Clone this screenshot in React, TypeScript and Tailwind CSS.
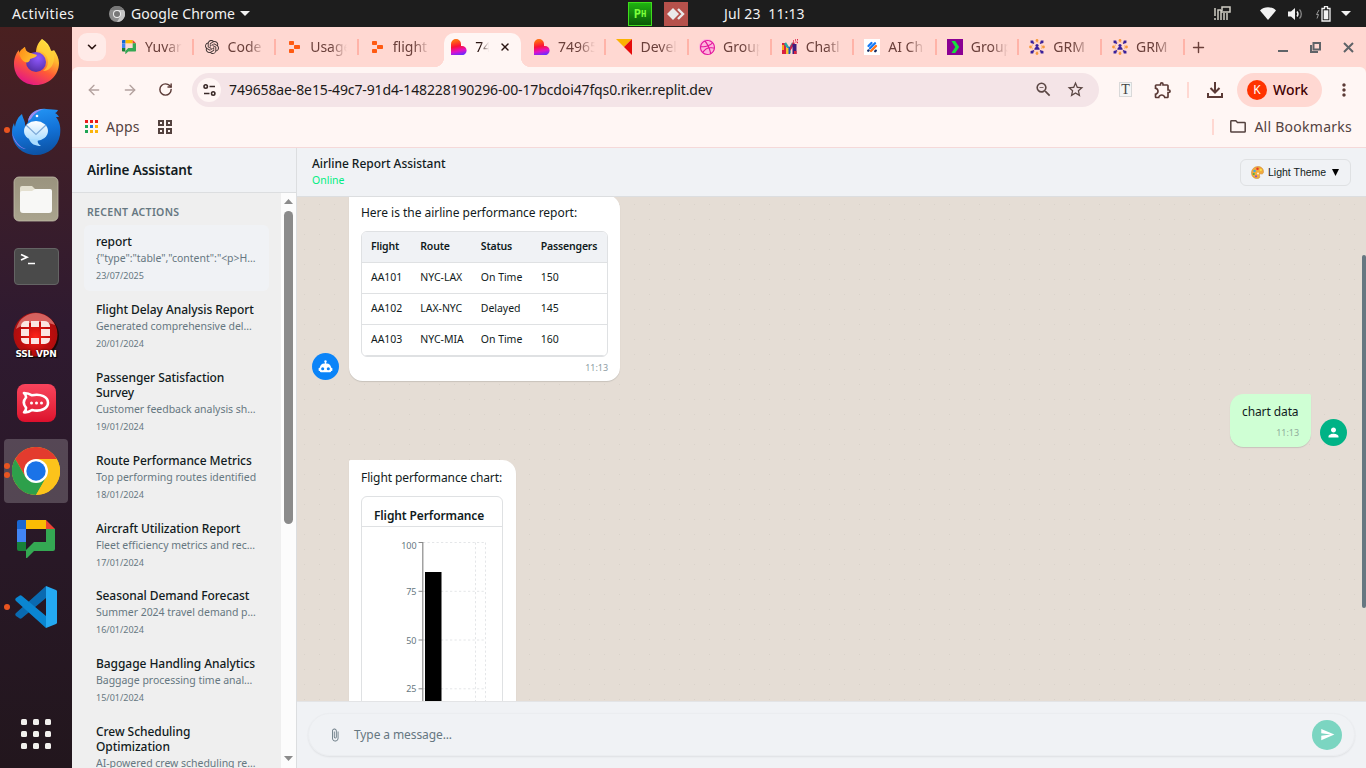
import React from "react";
import { ChevronDown, Plus, X, ArrowLeft, ArrowRight, RotateCw } from "lucide-react";
import {
  MdStarBorder,
  MdOutlineExtension,
  MdMoreVert,
  MdPerson,
  MdSend,
  MdAttachFile,
  MdZoomOut,
} from "react-icons/md";
import { SiOpenai, SiDribbble } from "react-icons/si";

/* ---------- Favicons ---------- */

const ChatFav = ({ size = 16 }: { size?: number }) => (
  <svg width={size} height={size} viewBox="0 0 38 38">
    <path d="M9 0h20v9H9z" fill="#fbbc04" />
    <path d="M2 0h7v9H0V2a2 2 0 0 1 2-2z" fill="#1967d2" />
    <path d="M0 9h9v13H0z" fill="#4285f4" />
    <path d="M29 0l9 9h-9z" fill="#ea4335" />
    <path d="M29 9h9v20a2 2 0 0 1-2 2H17l-7 7h-1V30l8-8h12z" fill="#34a853" />
    <path d="M0 22h9v9H2a2 2 0 0 1-2-2z" fill="#188038" />
  </svg>
);

const ReplitFav = () => (
  <svg width="16" height="16" viewBox="0 0 16 16">
    <rect x="3" y="2" width="5" height="4" rx="0.8" fill="#ff5a12" />
    <rect x="8" y="6" width="6" height="4" rx="0.8" fill="#ff5a12" />
    <rect x="3" y="10" width="5" height="4" rx="0.8" fill="#ff5a12" />
  </svg>
);

const HeartFav = () => (
  <svg width="16" height="16" viewBox="0 0 16 16">
    <defs>
      <linearGradient id="heart" x1="0.3" y1="0" x2="0.5" y2="1">
        <stop offset="0.1" stopColor="#ff6a10" />
        <stop offset="0.45" stopColor="#fb1236" />
        <stop offset="0.75" stopColor="#e112c8" />
        <stop offset="1" stopColor="#6a2cff" />
      </linearGradient>
    </defs>
    <path d="M0 5a5 5 0 0 1 10 0v2h1a4.6 4.6 0 0 1 0 9.200H0z" fill="url(#heart)" />
  </svg>
);

const FlagFav = () => (
  <svg width="16" height="16" viewBox="0 0 16 16">
    <path d="M0 0h16L8 8z" fill="#fbb200" />
    <path d="M16 0v16L8 8z" fill="#e60b0b" />
  </svg>
);

const DribbbleFav = () => (
  <span className="flex h-4 w-4 items-center justify-center rounded-full bg-[#ffb4dc]">
    <SiDribbble size={15} color="#e3179c" />
  </span>
);

const MFav = () => (
  <svg width="16" height="16" viewBox="0 0 16 16" fill="none">
    <path d="M0 4h4v11H0z" fill="#d9213f" />
    <path d="M0 6h2v5H0z" fill="#f7a81b" />
    <path d="M3 4l4.500 7v-1L11 4" stroke="#2aa7a0" strokeWidth="2.400" />
    <path d="M4 9h3v6H4z" fill="#f5c531" />
    <path d="M7.500 11L12 3.500" stroke="#c9234f" strokeWidth="2.400" />
    <path d="M10.500 5h4v10h-4z" fill="#3c1d7c" />
    <path d="M6.500 8h1.500v7H6.500z" fill="#1a56c4" />
    <path d="M12 12h2.500v3H12z" fill="#d9213f" />
    <path d="M11 2h1M13 1h1M15 .800h1M13.500 3h1M15 3.500h1" stroke="#e0264c" strokeWidth="1.400" />
  </svg>
);

const AiFav = () => (
  <svg width="16" height="16" viewBox="0 0 16 16">
    <rect width="16" height="16" fill="#fff" />
    <g strokeWidth="2.300" strokeLinecap="round">
      <path d="M4.500 7l3-3" stroke="#1479f5" />
      <path d="M6 9.200L11 4.200" stroke="#1479f5" />
      <path d="M7 12l5-5" stroke="#ff7418" />
      <path d="M11.200 12.200l.6-.6" stroke="#152a63" />
      <path d="M4.200 11.800l.4-.4" stroke="#152a63" />
    </g>
  </svg>
);

const ArrowFav = () => (
  <svg width="16" height="16" viewBox="0 0 16 16">
    <rect width="16" height="16" fill="#8b0093" />
    <path d="M4.500 2h3.700l4 6-4 6H4.500l3.800-6z" fill="#16e03c" />
  </svg>
);

const GrmFav = () => (
  <svg width="16" height="16" viewBox="0 0 16 16">
    <circle cx="8" cy="8" r="5" fill="none" stroke="#f9b171" strokeWidth="1" strokeDasharray="2 1.200" />
    <g fill="#f79a3c">
      <circle cx="8" cy="1.500" r="1.400" />
      <circle cx="8" cy="14.500" r="1.400" />
      <circle cx="1.500" cy="8" r="1.400" />
      <circle cx="14.500" cy="8" r="1.400" />
    </g>
    <g fill="#39209a">
      <path d="M1.500 1.500h2.700l1 3.600-3.600-1zM14.500 1.500h-2.700l-1 3.600 3.600-1zM1.500 14.500h2.700l1-3.600-3.600 1zM14.500 14.500h-2.700l-1-3.600 3.600 1z" />
      <circle cx="8" cy="6.500" r="1.600" />
      <path d="M5.300 10.800c0-4 5.400-4 5.400 0z" />
    </g>
  </svg>
);

/* ---------- Dock icons ---------- */

const Firefox = () => (
  <svg width="46" height="48" viewBox="0 0 46 48">
    <defs>
      <linearGradient id="ff1" x1="0.8" y1="0" x2="0.3" y2="1">
        <stop offset="0" stopColor="#fff44f" />
        <stop offset="0.35" stopColor="#ffb52e" />
        <stop offset="0.62" stopColor="#ff5a36" />
        <stop offset="1" stopColor="#e31587" />
      </linearGradient>
      <radialGradient id="ff2" cx="0.6" cy="0.3" r="0.8">
        <stop offset="0" stopColor="#9059ff" />
        <stop offset="1" stopColor="#4e2a9c" />
      </radialGradient>
      <linearGradient id="ff3" x1="0" y1="0" x2="1" y2="0.5">
        <stop offset="0" stopColor="#ff8a16" />
        <stop offset="1" stopColor="#ffc02e" />
      </linearGradient>
    </defs>
    <path
      d="M29 1c5 3 8 7 9 12 2 0 3-1 3-1 3 4 5 9 5 13 0 12-10 22-23 22S1 38 1 26c0-6 2-11 5-14 0 0 0 3 1 4 1-3 3-6 5-7 0 3 2 5 5 6h6c0-6 2-10 6-14z"
      fill="url(#ff1)"
    />
    <circle cx="23" cy="24" r="10" fill="url(#ff2)" />
    <path d="M6 15c2-4 5-5 6-6 0 3 2 6 5 6 3 1 5 1 7 2-1 3-5 3-7 4 0 3-3 4-5 3-3-1-5-5-6-9z" fill="url(#ff3)" />
    <path d="M25 13c5 0 10 4 10 11 0 4-2 7-5 9 8 0 12-8 11-16-3-6-8-10-12-16-3 3-4 7-4 12z" fill="#ffd338" opacity="0.7" />
  </svg>
);

const Thunderbird = () => (
  <svg className="mt-[3px]" width="50" height="48" viewBox="0 0 50 48">
    <defs>
      <linearGradient id="tb" x1="0.3" y1="0" x2="0.5" y2="1">
        <stop offset="0" stopColor="#2496f5" />
        <stop offset="0.5" stopColor="#1373d9" />
        <stop offset="1" stopColor="#0c52a4" />
      </linearGradient>
      <linearGradient id="tbe" x1="0" y1="0" x2="0" y2="1">
        <stop offset="0" stopColor="#fff" />
        <stop offset="1" stopColor="#a9dcff" />
      </linearGradient>
    </defs>
    <path
      d="M17 14C18 5 26 0 35 1c5 0 9 1 12 1-1 2-2 3-3 3 2 1 3 2 4 4l-3 0c4 5 5 11 4 18-2 12-12 20-24 20C11 47 1 37 1 24c0-4 1-7 2-9 0 2 1 3 1 4 1-6 3-10 7-13 1 5 4 8 3 13z"
      fill="url(#tb)"
    />
    <path d="M17 13C18 6 24 1 33 1c-7 2-10 5-13 10z" fill="#9b8cf0" />
    <path d="M1 24c2 8 7 15 14 17-6 0-13-7-14-17z" fill="#8e7ae8" />
    <circle cx="26" cy="8" r="1.3" fill="#fff" />
    <ellipse cx="25" cy="23" rx="12" ry="10" fill="url(#tbe)" />
    <path d="M18 31c2 5 6 7 12 7-3-2-4-4-3-7z" fill="#a9dcff" />
    <path d="M15 17l10 9.500L35 17" fill="none" stroke="#7da9d8" strokeWidth="1.200" />
  </svg>
);

const Files = () => (
  <svg className="mt-px" width="46" height="46" viewBox="0 0 46 46">
    <defs>
      <linearGradient id="fl" x1="0" y1="0" x2="0" y2="1">
        <stop offset="0" stopColor="#9a937e" />
        <stop offset="1" stopColor="#aaa48e" />
      </linearGradient>
    </defs>
    <rect x="1" y="1" width="44" height="44" rx="5" fill="url(#fl)" stroke="#c2bda9" strokeWidth="0.8" />
    <path d="M7 12a2 2 0 0 1 2-2h10l4 4h13v10H7z" fill="#e4e0d0" />
    <path d="M7 17a2 2 0 0 1 2-2h10l3-2h15a2 2 0 0 1 2 2v19a3 3 0 0 1-3 3H10a3 3 0 0 1-3-3z" fill="#f8f8f6" />
  </svg>
);

const Terminal = () => (
  <span className="flex h-[37px] w-[45px] items-start rounded-[4px] border border-[#646464] bg-[#4a4a4a] pl-[5px] pt-[4px]">
    <svg width="16" height="12" viewBox="0 0 16 12" fill="none" stroke="#fff" strokeWidth="1.7">
      <path d="M1 1.500l6 2.700-6 2.800M8 10.500h7" />
    </svg>
  </span>
);

const SslVpn = () => (
  <span className="relative mt-px flex h-[46px] w-[46px] justify-center">
    <svg width="46" height="46" viewBox="0 0 46 46">
      <defs>
        <radialGradient id="vpn" cx="0.5" cy="0.55" r="0.55">
          <stop offset="0" stopColor="#ff2418" />
          <stop offset="0.6" stopColor="#c00c0c" />
          <stop offset="1" stopColor="#a51010" />
        </radialGradient>
      </defs>
      <circle cx="24" cy="24" r="22" fill="#1c0a0a" />
      <circle cx="22.5" cy="22.5" r="22" fill="url(#vpn)" />
      <path d="M3 17C6 6 15 1 23 1s16 5 19 12C30 8 14 9 3 17z" fill="#ef9a94" opacity="0.6" />
      <g fill="#fbe5e2">
        <path d="M8 14a5 5 0 0 1 5-5h3v6H8zM18 9h8v6h-8zM28 9h3a6 6 0 0 1 6 5v1h-9zM8 17h8v7H8zM28 17h9v7h-9zM8 26h8v6h-3a5 5 0 0 1-5-5zM18 26h8v6h-8zM28 26h9v1a5 5 0 0 1-5 5h-4z" />
      </g>
    </svg>
    <span
      className="absolute bottom-[-1px] whitespace-nowrap font-['DejaVu_Sans'] text-[9px] font-bold leading-[10px] tracking-[-0.2px] text-white"
      style={{ textShadow: "0 0 2px #000, 1px 1px 1px #000" }}
    >
      SSL VPN
    </span>
  </span>
);

const RocketChat = () => (
  <span className="flex h-[38px] w-[39px] items-center justify-center rounded-[8px] bg-linear-to-b from-[#f8435c] to-[#dd0f2c]">
    <svg width="28" height="24" viewBox="0 0 28 24">
      <path
        d="M2 2c3 0 6 1 8 2.300C19 2.500 26 6 26 11.700S19 21 10 19c-2 1.500-5 2.500-8 2.300 1.500-1.500 2.200-3 2-4.600C1.300 13.500 1.300 9.500 4 6.500 4.200 5 3.500 3.500 2 2z"
        fill="none"
        stroke="#fff"
        strokeWidth="2.600"
        strokeLinejoin="round"
      />
      <circle cx="9.500" cy="12" r="1.500" fill="#fff" />
      <circle cx="14.500" cy="12" r="1.500" fill="#fff" />
      <circle cx="19.500" cy="12" r="1.500" fill="#fff" />
    </svg>
  </span>
);

const Chrome = () => (
  <svg width="48" height="48" viewBox="0 0 48 48">
    <circle cx="24" cy="24" r="24" fill="#fbc116" />
    <path d="M24 12h20.800A24 24 0 0 0 3.200 12L13.600 30z" fill="#e33b2e" />
    <path d="M34.400 30L24 48A24 24 0 0 1 3.200 12l10.400 18z" fill="#2da04b" />
    <path d="M24 12h20.800A24 24 0 0 1 24 48l10.400-18z" fill="#fcc31b" />
    <circle cx="24" cy="24" r="12" fill="#fff" />
    <circle cx="24" cy="24" r="9.700" fill="#1a73e8" />
  </svg>
);

const VsCode = () => (
  <svg width="42" height="42" viewBox="0 0 42 42">
    <path d="M31 0L1 27c-1 1-1 2 0 3l3 2c1 1 2 1 3 0L31 12z" fill="#0a6ab0" />
    <path d="M31 42L1 15c-1-1-1-2 0-3l3-2c1-1 2-1 3 0l24 20z" fill="#0a86d1" />
    <path d="M31 0l10 4c1 .5 1 1 1 2v30c0 1 0 1.500-1 2l-10 4z" fill="#24a9f2" />
  </svg>
);

const AppGrid = () => (
  <span className="grid grid-cols-3 gap-[6px]">
    {Array.from({ length: 9 }, (_, i) => (
      <span key={i} className="h-[6px] w-[6px] rounded-[1.500px] bg-[#f2f0ee]" />
    ))}
  </span>
);

const dock: { icon: React.ReactNode; dots?: number; active?: boolean }[] = [
  { icon: <Firefox /> },
  { icon: <Thunderbird />, dots: 1 },
  { icon: <Files /> },
  { icon: <Terminal /> },
  { icon: <SslVpn /> },
  { icon: <RocketChat /> },
  { icon: <Chrome />, dots: 2, active: true },
  { icon: <ChatFav size={38} /> },
  { icon: <VsCode />, dots: 1 },
];

/* ---------- Desktop top bar ---------- */

const TopBar = () => (
  <div className="flex h-[27px] shrink-0 items-center bg-[#1d1d1d] font-['Noto_Sans',sans-serif] text-[14px] leading-[27px] text-[#f2f2f2]">
    <div className="flex w-[628px] items-center pl-3">
      <span className="w-[97px] tracking-[0.4px]">Activities</span>
      <svg width="16" height="16" viewBox="0 0 16 16">
        <circle cx="8" cy="8" r="8" fill="#8c8c8c" />
        <path d="M8 4h7A8 8 0 0 1 8 16l3.500-6z" fill="#c4c4c4" />
        <path d="M1 4A8 8 0 0 1 15 4H8z" fill="#777" />
        <circle cx="8" cy="8" r="4" fill="#eee" />
        <circle cx="8" cy="8" r="3" fill="#777" />
      </svg>
      <span className="ml-[6px] w-[109px] whitespace-nowrap tracking-[0.05px]">Google Chrome</span>
      <svg width="10" height="5" viewBox="0 0 10 5">
        <path d="M0 0h10L5 5z" fill="#f2f2f2" />
      </svg>
    </div>
    <span className="flex h-6 w-6 items-center justify-center border border-[#3fdc1c] bg-linear-to-b from-[#1fb410] to-[#0a5a08] font-['DejaVu_Sans_Mono'] text-[12px] font-bold leading-none text-[#7dff3c]">
      P<span className="mt-[2px] text-[9px]">H</span>
    </span>
    <span className="ml-3 flex h-6 w-6 items-center justify-center bg-[#b6514b]">
      <svg width="18" height="12" viewBox="0 0 18 12">
        <path d="M6 0l6 6-6 6-6-6z" fill="#eaeaea" />
        <path d="M11 1l5 5-5 5" fill="none" stroke="#eaeaea" strokeWidth="2.400" />
      </svg>
    </span>
    <span className="ml-[36px] whitespace-pre tracking-[0.15px]">Jul 23  11:13</span>
    <div className="ml-auto flex items-center pr-[15px]">
      <svg width="17" height="16" viewBox="0 0 17 16" fill="none" stroke="#d0cdc4" strokeWidth="1.500">
        <path d="M1 2v8M1 12v2M4 14V4h3M7 4v10M10 14V7M13 14V7M7 6h9V1H8v4" />
      </svg>
      <svg className="ml-[29px]" width="16" height="13" viewBox="0 0 16 13">
        <path d="M0 3.500C4-.9 12-.9 16 3.500L8 13z" fill="#f2f2f2" />
      </svg>
      <svg className="ml-[12px]" width="15" height="14" viewBox="0 0 15 14" fill="none">
        <path d="M0 4.500h3L7 1v12L3 9.500H0z" fill="#f2f2f2" />
        <path d="M9 4.500c1.200 1.500 1.200 3.500 0 5" stroke="#f2f2f2" strokeWidth="1.400" />
        <path d="M11.500 2.500c2.400 2.500 2.400 6.500 0 9" stroke="#888" strokeWidth="1.300" />
      </svg>
      <svg className="ml-[12px]" width="16" height="16" viewBox="0 0 16 16" fill="none">
        <path d="M4 4L1.500 8.500h2L2 12.500" stroke="#999" strokeWidth="1" />
        <path d="M7 2.500h2.500V.7h3v1.800H15V15H7z" stroke="#f2f2f2" strokeWidth="1.300" />
        <path d="M8.700 4.300h4.600v9H8.700z" fill="#f2f2f2" />
      </svg>
      <svg className="ml-[10px]" width="10" height="5" viewBox="0 0 10 5">
        <path d="M0 0h10L5 5z" fill="#f2f2f2" />
      </svg>
    </div>
  </div>
);

/* ---------- Browser chrome ---------- */

const tabs: { fav: React.ReactNode; label: string; active?: boolean; sep?: boolean }[] = [
  { fav: <ChatFav size={14} />, label: "Yuvar", sep: true },
  { fav: <SiOpenai size={14} color="#3b3030" />, label: "Code", sep: true },
  { fav: <ReplitFav />, label: "Usage", sep: true },
  { fav: <ReplitFav />, label: "flight" },
  { fav: <HeartFav />, label: "74", active: true },
  { fav: <HeartFav />, label: "74965", sep: true },
  { fav: <FlagFav />, label: "Devel", sep: true },
  { fav: <DribbbleFav />, label: "Group", sep: true },
  { fav: <MFav />, label: "Chatl", sep: true },
  { fav: <AiFav />, label: "AI Ch", sep: true },
  { fav: <ArrowFav />, label: "Group", sep: true },
  { fav: <GrmFav />, label: "GRM", sep: true },
  { fav: <GrmFav />, label: "GRM", sep: true },
];

const TabStrip = () => (
  <div className="flex h-10 items-center bg-[#ffd8d2] pl-[6px] text-[#6b403b]">
    <span className="flex h-7 w-7 shrink-0 items-center justify-center rounded-[9px] bg-[#ffebe8]">
      <ChevronDown size={14} strokeWidth={2.800} color="#2a1512" />
    </span>
    <div className="ml-[4px] flex h-full">
      {tabs.map((t, i) => (
        <div key={i} className="relative flex h-full w-[82.580px] items-center pl-[11px]">
          {t.active && (
            <span className="absolute left-[4px] top-[6px] h-[34px] w-[77px] rounded-t-[10px] bg-[#fff6f4]">
              <span className="absolute bottom-0 left-[-10px] h-[10px] w-[10px] bg-[radial-gradient(circle_at_0_0,transparent_10px,#fff6f4_10.500px)]" />
              <span className="absolute bottom-0 right-[-10px] h-[10px] w-[10px] bg-[radial-gradient(circle_at_100%_0,transparent_10px,#fff6f4_10.500px)]" />
            </span>
          )}
          <span className="relative flex h-4 w-4 shrink-0 items-center justify-center">{t.fav}</span>
          <span
            className={
              t.active
                ? "relative -mt-px ml-[8px] w-[14px] overflow-hidden whitespace-nowrap text-[14px] text-[#2a1512] [mask-image:linear-gradient(90deg,#000_40%,transparent)]"
                : "relative -mt-px ml-[8px] w-[37px] overflow-hidden whitespace-nowrap text-[14px] [mask-image:linear-gradient(90deg,#000_55%,transparent)]"
            }
          >
            {t.label}
          </span>
          {t.active && <X className="relative ml-[10px]" size={12} strokeWidth={2.800} color="#2a1512" />}
          {t.sep && <span className="absolute right-[-1px] top-[12px] h-4 w-[2px] bg-[#ffb3a8]" />}
        </div>
      ))}
    </div>
    <Plus className="ml-[6px]" size={17} strokeWidth={2} />
    <div className="ml-auto flex items-center gap-[22px] pr-[12px] text-[#5f6368]">
      <span className="mt-[8px] h-[2px] w-[10px] bg-[#5f6368]" />
      <svg width="11" height="11" viewBox="0 0 11 11" fill="none" stroke="currentColor" strokeWidth="2">
        <path d="M3.500 1h6.500v6.500H3.500zM1 3v7h7" />
      </svg>
      <svg width="11" height="11" viewBox="0 0 11 11" fill="none" stroke="currentColor" strokeWidth="2">
        <path d="M1 1l9 9M10 1l-9 9" />
      </svg>
    </div>
  </div>
);

const Toolbar = () => (
  <div className="flex h-[45px] items-center rounded-tl-[6px] rounded-tr-[6px] bg-[#fff6f4] pl-[14px] text-[#5b3a36]">
    <ArrowLeft size={16} strokeWidth={2} color="#b3a19e" />
    <ArrowRight className="ml-5" size={16} strokeWidth={2} color="#b3a19e" />
    <RotateCw className="ml-5" size={15} strokeWidth={2.300} />
    <div className="ml-[19px] flex h-[34px] w-[907px] items-center rounded-full bg-[#f4e4e7] pl-[5px] pr-[14px] text-[#201a19]">
      <span className="flex h-6 w-6 items-center justify-center rounded-full bg-[#fff6f4]">
        <svg width="13" height="12" viewBox="0 0 13 12" fill="none" stroke="#3a2a28" strokeWidth="1.600">
          <circle cx="2.700" cy="2.500" r="1.700" />
          <path d="M6.500 2.500H12M1 9.500h5.500" />
          <circle cx="10.200" cy="9.500" r="1.700" />
        </svg>
      </span>
      <span className="ml-[8px] text-[14px] tracking-[-0.12px]">749658ae-8e15-49c7-91d4-148228190296-00-17bcdoi47fqs0.riker.replit.dev</span>
      <MdZoomOut className="ml-auto" size={19} color="#5b4744" />
      <MdStarBorder className="ml-[13px]" size={19} color="#5b4744" />
    </div>
    <span className="ml-[20px] flex h-[15px] w-[13px] items-center justify-center border border-[#d9d9d9] bg-[#f5f5f5] font-['Liberation_Serif'] text-[14px] leading-none text-[#444]">
      T
    </span>
    <MdOutlineExtension className="ml-[21px]" size={20} />
    <span className="ml-[14px] h-4 w-[2px] bg-[#ffd8d2]" />
    <svg className="ml-[18px]" width="16" height="16" viewBox="0 0 16 16" fill="none" stroke="#5b3a36" strokeWidth="2">
      <path d="M8 0v10M3.500 6L8 10.500 12.500 6M1 11v4h14v-4" />
    </svg>
    <span className="ml-[14px] flex h-[34px] w-[85px] items-center rounded-full bg-[#ffd8d2] pl-[10px] text-[14px] font-medium text-[#410002]">
      <span className="mr-[6px] flex h-5 w-5 items-center justify-center rounded-full bg-[#ff3300] text-[12px] font-normal text-white">K</span>
      Work
    </span>
    <MdMoreVert className="ml-[12px]" size={20} />
  </div>
);

const appDots = ["#ea1c1c", "#ea1c1c", "#ea1c1c", "#1ea454", "#1a73e8", "#fbb40a", "#1ea454", "#fbb40a", "#fbb40a"];

const Bookmarks = () => (
  <div className="flex h-[36px] items-center border-b border-[#f5d9d9] bg-[#fff6f4] pb-[6px] pl-[13px] pr-[14px] text-[14px] text-[#54423f]">
    <span className="grid grid-cols-3 gap-[2px]">
      {appDots.map((c, i) => (
        <span key={i} className="h-[3px] w-[3px]" style={{ background: c }} />
      ))}
    </span>
    <span className="-mt-px ml-[8px] w-[52px] tracking-[0.2px]">Apps</span>
    <span className="grid grid-cols-2 gap-[2px]">
      {[0, 1, 2, 3].map((i) => (
        <span key={i} className="h-[6px] w-[6px] border-2 border-[#54423f]" />
      ))}
    </span>
    <span className="ml-auto h-4 w-[2px] bg-[#ffd8d2]" />
    <svg className="ml-[16px] mr-[8px]" width="16" height="13" viewBox="0 0 16 13" fill="none" stroke="#54423f" strokeWidth="1.500">
      <path d="M.8 1.500c0-.4.300-.7.700-.7h4.300l1.700 1.700h7c.4 0 .7.300.7.700v8.200c0 .4-.3.700-.7.700h-13c-.4 0-.7-.3-.7-.7z" />
    </svg>
    <span className="-mt-px tracking-[0.260px]">All Bookmarks</span>
  </div>
);

/* ---------- App sidebar ---------- */

const actions = [
  { title: "report", desc: '{"type":"table","content":"<p>Here is the airline', date: "23/07/2025", selected: true },
  { title: "Flight Delay Analysis Report", desc: "Generated comprehensive delay analysis", date: "20/01/2024" },
  { title: "Passenger Satisfaction Survey", desc: "Customer feedback analysis shows", date: "19/01/2024" },
  { title: "Route Performance Metrics", desc: "Top performing routes identified", date: "18/01/2024" },
  { title: "Aircraft Utilization Report", desc: "Fleet efficiency metrics and recommendations", date: "17/01/2024" },
  { title: "Seasonal Demand Forecast", desc: "Summer 2024 travel demand predictions", date: "16/01/2024" },
  { title: "Baggage Handling Analytics", desc: "Baggage processing time analysis", date: "15/01/2024" },
  { title: "Crew Scheduling Optimization", desc: "AI-powered crew scheduling recommendations", date: "14/01/2024" },
];

const Sidebar = () => (
  <aside className="flex w-[225px] shrink-0 flex-col border-r border-[#dcdee0] bg-[#efefef]">
    <div className="flex h-[45px] shrink-0 items-center border-b border-[#dcdee0] bg-[#f0f2f5] pl-[15px] text-[13.500px] font-semibold tracking-[-0.090px] text-[#111b21]">
      Airline Assistant
    </div>
    <div className="flex min-h-0 flex-1">
      <div className="w-[209px] overflow-hidden pl-[12px] pr-[12px] pt-[12px]">
        <h3 className="mb-[5.100px] pl-[3px] text-[10.500px] font-semibold leading-[15px] tracking-[0.320px] text-[#667781]">RECENT ACTIONS</h3>
        {actions.map((a) => (
          <div
            key={a.title}
            className={`mb-[1.500px] rounded-[6px] px-[12px] py-[9px] ${a.selected ? "bg-[#f0f2f5]" : ""}`}
          >
            <div className="text-[12px] font-medium leading-[15.600px] tracking-[-0.060px] text-[#111b21]">{a.title}</div>
            <div className="mt-[2.700px] truncate text-[10.500px] leading-[13.700px] tracking-[-0.030px] text-[#667781]">{a.desc}</div>
            <div className="mt-[4.100px] text-[9px] leading-[12.120px] text-[#667781]">{a.date}</div>
          </div>
        ))}
      </div>
      <div className="flex w-[15px] flex-col items-center justify-between bg-[#fcfcfc] py-[6px]">
        <svg width="9" height="5" viewBox="0 0 9 5">
          <path d="M4.500 0L9 5H0z" fill="#8b8b8b" />
        </svg>
        <span className="mt-[7px] h-[313px] w-[9px] rounded-full bg-[#8b8b8b]" />
        <span className="flex-1" />
        <svg className="mb-px" width="9" height="5" viewBox="0 0 9 5">
          <path d="M0 0h9L4.500 5z" fill="#8b8b8b" />
        </svg>
      </div>
    </div>
  </aside>
);

/* ---------- Chat ---------- */

const Palette = () => (
  <svg width="13" height="13" viewBox="0 0 26 26">
    <path d="M14 1C6 1 1 7 1 14c0 7 5 11 11 11 6 0 6-3 5-6-1-2 1-4 4-3 3 0 4-2 4-5C25 5 20 1 14 1z" fill="#f2ab3c" stroke="#c9812a" />
    <circle cx="7" cy="10" r="2.500" fill="#3fa8e8" />
    <circle cx="13" cy="5.500" r="2.500" fill="#e5392f" />
    <circle cx="19.500" cy="8" r="2.300" fill="#fbe04b" />
    <circle cx="5.500" cy="16" r="2.200" fill="#49b04a" />
    <circle cx="10" cy="20.500" r="2" fill="#8d4bd0" />
    <circle cx="14" cy="15" r="2" fill="#fff2d6" />
  </svg>
);

const BotAvatar = () => (
  <span className="flex h-[27px] w-[27px] shrink-0 items-center justify-center rounded-full bg-[#0b84f8]">
    <svg width="15" height="15" viewBox="0 0 24 24" fill="#fff">
      <path d="M12,2A2,2 0 0,1 14,4C14,4.740 13.600,5.390 13,5.730V7H14A7,7 0 0,1 21,14H22A1,1 0 0,1 23,15V18A1,1 0 0,1 22,19H21A2,2 0 0,1 19,21H5A2,2 0 0,1 3,19H2A1,1 0 0,1 1,18V15A1,1 0 0,1 2,14H3A7,7 0 0,1 10,7H11V5.730C10.400,5.390 10,4.740 10,4A2,2 0 0,1 12,2M7.500,13A2.500,2.500 0 0,0 5,15.500A2.500,2.500 0 0,0 7.500,18A2.500,2.500 0 0,0 10,15.500A2.500,2.500 0 0,0 7.500,13M16.500,13A2.500,2.500 0 0,0 14,15.500A2.500,2.500 0 0,0 16.500,18A2.500,2.500 0 0,0 19,15.500A2.500,2.500 0 0,0 16.500,13Z" />
    </svg>
  </span>
);

const rows = [
  ["AA101", "NYC-LAX", "On Time", "150"],
  ["AA102", "LAX-NYC", "Delayed", "145"],
  ["AA103", "NYC-MIA", "On Time", "160"],
];

const tableCols = "grid grid-cols-[49.300px_60.500px_60px_1fr] pl-[9px]";

const Table = () => (
  <div className="mt-[9px] w-[247px] overflow-hidden rounded-[6px] border border-[#dfe1e3] text-[10.500px] leading-[29px]">
    <div className={`${tableCols} bg-[#f0f2f5] pb-px font-semibold tracking-[-0.180px] text-[#111b21]`}>
      <span>Flight</span>
      <span>Route</span>
      <span>Status</span>
      <span>Passengers</span>
    </div>
    {rows.map((r) => (
      <div key={r[0]} className={`${tableCols} border-t border-[#dfe1e3] pb-px tracking-[-0.030px]`}>
        {r.map((c, i) => (
          <span key={i}>{c}</span>
        ))}
      </div>
    ))}
    <div className="border-t border-[#dfe1e3]" />
  </div>
);

const ticks = [
  { v: 100, y: 15.500 },
  { v: 75, y: 64.300 },
  { v: 50, y: 113 },
  { v: 25, y: 161.800 },
];

const Chart = () => (
  <div className="mt-[9px] h-[260px] w-[142px] rounded-t-[6px] border border-[#dfe1e3]">
    <div className="h-[30px] border-b border-[#dfe1e3] pl-[12px] pt-[8px] text-[12px] font-semibold leading-[21px] tracking-[-0.120px] text-[#111b21]">
      Flight Performance
    </div>
    <svg width="140" height="220" viewBox="0 0 140 220">
      <g stroke="#e4e6e8" strokeDasharray="2.250 2.250">
        {ticks.map((t) => (
          <path key={t.v} d={`M61 ${t.y}h63`} />
        ))}
        <path d="M113.500 15.500V220M123.500 15.500V220" />
      </g>
      <path d="M60.800 15V220" stroke="#8a8a8a" strokeWidth="1.200" />
      {ticks.map((t) => (
        <g key={t.v}>
          <path d={`M56.500 ${t.y}h4.500`} stroke="#8a8a8a" />
          <text
            x="54.500"
            y={t.y + (t.v === 100 ? 6.200 : 3.500)}
            textAnchor="end"
            fontSize="9"
            fill="#667781"
          >
            {t.v}
          </text>
        </g>
      ))}
      <path d="M63 45h16.500v175H63z" fill="#000" />
    </svg>
  </div>
);

const shadow = "shadow-[0_1px_1px_rgba(11,20,26,0.13)]";

const Messages = () => (
  <div className="relative min-h-0 flex-1 overflow-hidden bg-[#e5ddd5] bg-[radial-gradient(circle_at_50%_50%,rgba(0,0,0,0.05)_0.700px,transparent_0.710px)] bg-[size:15px_15px]">
    <div className="-mt-[2px] flex flex-col gap-[13px] pl-[15px] pr-[19px] text-[12px] tracking-[-0.030px] text-[#111b21]">
      <div className="flex items-end">
        <span className="mb-px">
          <BotAvatar />
        </span>
        <div className={`ml-[10px] h-[186px] w-[271px] rounded-[13.500px] rounded-tl-[1.500px] bg-white px-[12px] pt-[9px] ${shadow}`}>
          <p className="leading-[18px]">Here is the airline performance report:</p>
          <Table />
          <div className="mt-[5px] text-right text-[9px] leading-[12px] text-[#8e9ba3]">11:13</div>
        </div>
      </div>
      <div className="flex items-end justify-end">
        <div className={`mr-[9px] h-[53px] w-[81px] rounded-[13.500px] rounded-tr-[1.500px] bg-[#cfffd4] px-[12px] pt-[9px] ${shadow}`}>
          <p className="whitespace-nowrap leading-[18px] tracking-[-0.100px]">chart data</p>
          <div className="mt-[6px] text-right text-[9px] leading-[12px] text-[#8fac9b]">11:13</div>
        </div>
        <span className="mb-px flex h-[27px] w-[27px] items-center justify-center rounded-full bg-[#00b386]">
          <MdPerson size={15} color="#fff" />
        </span>
      </div>
      <div className="flex">
        <div className={`ml-[37px] h-[300px] w-[166.500px] rounded-[13.500px] rounded-tl-[1.500px] bg-white px-[12px] pt-[9px] ${shadow}`}>
          <p className="whitespace-nowrap leading-[18px] tracking-[-0.100px]">Flight performance chart:</p>
          <Chart />
        </div>
      </div>
    </div>
    <span className="absolute right-0 top-[58px] h-[353px] w-[4px] rounded-[2px] bg-[#667781]" />
  </div>
);

const Chat = () => (
  <main className="flex min-w-0 flex-1 flex-col">
    <header className="flex h-[49px] shrink-0 items-center justify-between border-b border-[#dcdee0] bg-[#f0f2f5] pl-[15px] pr-[15px]">
      <div className="-mt-[2px]">
        <div className="text-[12px] font-medium leading-[17px] tracking-[-0.040px] text-[#111b21]">Airline Report Assistant</div>
        <div className="text-[10.500px] leading-[16px] text-[#00ee82]">Online</div>
      </div>
      <button className="flex h-[27px] w-[111px] items-center rounded-[6px] border border-[#dfe1e3] pl-[10px] font-['Liberation_Sans',sans-serif] text-[10.500px] text-[#111b21]">
        <Palette />
        <span className="ml-[4px] mt-px">Light Theme</span>
        <svg className="ml-[6px] mt-px" width="7" height="7" viewBox="0 0 7 7">
          <path d="M0 0h7L3.500 7z" fill="#000" />
        </svg>
      </button>
    </header>
    <Messages />
    <footer className="h-[67px] shrink-0 border-t border-[#e3e4e6] bg-[#f0f2f5] px-[11px] pt-[11px]">
      <div className="flex h-[43px] items-center rounded-full border border-[#ebedf0] pl-[19px] pr-[12px] shadow-[0_1px_2px_rgba(0,0,0,0.08)]">
        <MdAttachFile size={14} color="#667781" />
        <span className="ml-[12px] text-[12px] tracking-[-0.100px] text-[#667781]">Type a message...</span>
        <span className="ml-auto flex h-[30px] w-[30px] items-center justify-center rounded-full bg-[#7bd5c1]">
          <MdSend size={15} color="#fff" />
        </span>
      </div>
    </footer>
  </main>
);

export default function App() {
  return (
    <div className="flex h-[768px] w-[1366px] flex-col overflow-hidden font-['Noto_Sans',sans-serif]">
      <TopBar />
      <div className="flex min-h-0 flex-1">
        <nav className="flex w-[72px] shrink-0 flex-col bg-linear-to-b from-[#4a2020] via-[#2f1a30] via-40% to-[#22161d] pt-px">
          {dock.map((d, i) => (
            <div key={i} className="relative flex h-[68.100px] shrink-0 items-center justify-center">
              {d.active && <span className="absolute inset-x-[4px] inset-y-[2px] rounded-[4px] bg-white/20" />}
              {d.dots && (
                <span className="absolute left-[4px] flex flex-col gap-[3px]">
                  {Array.from({ length: d.dots }, (_, k) => (
                    <span key={k} className="h-[6px] w-[6px] rounded-full bg-[#e95420]" />
                  ))}
                </span>
              )}
              <span className="relative flex">{d.icon}</span>
            </div>
          ))}
          <div className="mt-auto flex h-[68px] items-center justify-center">
            <AppGrid />
          </div>
        </nav>
        <div className="flex min-w-0 flex-1 flex-col">
          <div className="shrink-0 bg-[#ffd8d2]">
            <TabStrip />
            <Toolbar />
            <Bookmarks />
          </div>
          <div className="flex min-h-0 flex-1">
            <Sidebar />
            <Chat />
          </div>
        </div>
      </div>
    </div>
  );
}
